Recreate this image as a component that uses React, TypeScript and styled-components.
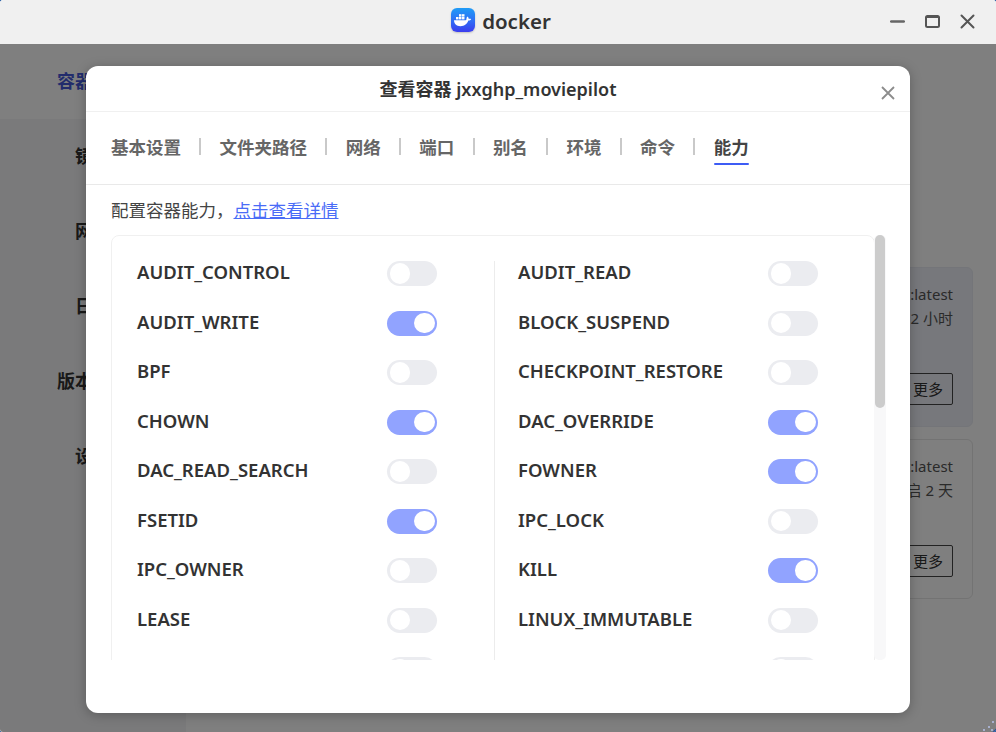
import React from "react";
import styled, { createGlobalStyle } from "styled-components";

const FONT = `"Noto Sans", "Noto Sans CJK SC", sans-serif`;

const Global = createGlobalStyle`
  html, body { margin: 0; padding: 0; background: #0d4a9a; }
  #root { width: 996px; height: 732px; overflow: hidden; }
  * { box-sizing: border-box; }
`;

const Win = styled.div`
  position: relative;
  width: 996px;
  height: 732px;
  display: flex;
  flex-direction: column;
  font-family: ${FONT};
  background: #fff;
  border-radius: 3px;
  overflow: hidden;
`;
const TitleBar = styled.header`
  height: 44px;
  flex: none;
  background: #f0f0f0;
  display: grid;
  grid-template-columns: 1fr auto 1fr;
  align-items: center;
`;
const Brand = styled.div`
  grid-column: 2;
  display: flex;
  align-items: center;
  gap: 7px;
  font-size: 20.500px;
  font-weight: 600;
  color: #333;
  margin: -4px 0 0 6px;
`;
const BrandName = styled.span`
  margin-top: 1px;
`;
const LogoBox = styled.div`
  width: 24px;
  height: 24px;
  border-radius: 6px;
  background: linear-gradient(180deg, #1f9cf6 0%, #2f6cf5 55%, #3b3cee 100%);
  display: flex;
  align-items: center;
  justify-content: center;
  box-shadow: 0 1px 2px rgba(0, 0, 0, 0.2);
`;
const WinBtns = styled.div`
  grid-column: 3;
  justify-self: end;
  display: flex;
  align-items: center;
  gap: 20px;
  padding-right: 21px;
  margin-top: -1px;
`;
const Body = styled.div`
  flex: 1;
  display: flex;
  background: #fff;
`;
const Side = styled.nav`
  width: 186px;
  flex: none;
  background: #f5f5f6;
  display: flex;
  flex-direction: column;
`;
const SideItem = styled.div<{ $active?: boolean }>`
  height: 75px;
  padding-bottom: 3px;
  display: flex;
  align-items: center;
  justify-content: center;
  font-size: 18px;
  font-weight: 600;
  color: ${(p) => (p.$active ? "#4458d8" : "#333")};
  background: ${(p) => (p.$active ? "#ffffff" : "transparent")};
`;
const Main = styled.main`
  flex: 1;
  padding: 223px 23px 0 0;
  display: flex;
  flex-direction: column;
  align-items: flex-end;
  gap: 12px;
`;
const Card = styled.div<{ $tint?: boolean }>`
  width: 400px;
  height: 160px;
  border: 1px solid ${(p) => (p.$tint ? "#e8ebf2" : "#e6e6e6")};
  background: ${(p) => (p.$tint ? "#eef0f8" : "#fff")};
  border-radius: 6px;
  padding: 14px 19px 0 0;
  display: flex;
  flex-direction: column;
  align-items: flex-end;
  font-size: 15px;
  line-height: 24px;
  color: #555;
`;
const MoreBtn = styled.div`
  width: 80px;
  height: 32px;
  margin-top: 43px;
  border: 1px solid #444;
  border-radius: 2px;
  display: flex;
  align-items: center;
  justify-content: flex-end;
  padding: 0 9px 1px 0;
  font-size: 15px;
  color: #333;
`;
const Overlay = styled.div`
  position: absolute;
  left: 0;
  right: 0;
  top: 44px;
  bottom: 0;
  background: rgba(0, 0, 0, 0.5);
`;
const Modal = styled.section`
  position: absolute;
  left: 86px;
  top: 66px;
  width: 824px;
  height: 647px;
  background: #fff;
  border-radius: 12px;
  box-shadow: 0 2px 12px rgba(0, 0, 0, 0.25);
  display: flex;
  flex-direction: column;
`;
const ModalHead = styled.div`
  position: relative;
  height: 46px;
  flex: none;
  padding-bottom: 2px;
  border-bottom: 1px solid #f0f0f0;
  display: flex;
  align-items: center;
  justify-content: center;
  font-size: 18px;
  font-weight: 600;
  color: #333;
`;
const CloseBtn = styled.div`
  position: absolute;
  right: 14px;
  top: 20px;
  width: 16px;
  height: 14px;
  display: flex;
`;
const Tabs = styled.div`
  height: 73px;
  flex: none;
  border-bottom: 1px solid #e9e9e9;
  display: flex;
  align-items: center;
  padding-left: 25px;
`;
const Tab = styled.div<{ $active?: boolean }>`
  position: relative;
  font-size: 17.500px;
  font-weight: 600;
  line-height: 26px;
  margin-top: -3px;
  color: ${(p) => (p.$active ? "#444" : "#666")};
  ${(p) =>
    p.$active &&
    `&::after { content: ""; position: absolute; left: 0; right: 0; bottom: -5px; height: 2px; background: #3d5cf5; border-radius: 1px; }`}
`;
const Sep = styled.div`
  width: 2px;
  height: 17px;
  margin: -3px 18.300px 0;
  background: #c9c9c9;
`;
const Hint = styled.div`
  height: 50px;
  flex: none;
  padding: 12px 0 0 25px;
  font-size: 17.500px;
  line-height: 26px;
  color: #444;
`;
const Link = styled.a`
  color: #4a6cf7;
  text-decoration: underline;
`;
const ScrollArea = styled.div`
  margin-left: 25px;
  width: 775px;
  height: 425px;
  display: flex;
  overflow: hidden;
  flex: none;
`;
const Panel = styled.div`
  flex: 1;
  height: 600px;
  border: 1px solid #f0f0f0;
  border-radius: 8px;
  padding: 0 25px;
  display: grid;
  grid-template-columns: 357px 1px 1fr;
  align-content: start;
`;
const LeftCol = styled.div`
  padding: 13px 0 0 0;
`;
const RightCol = styled.div`
  padding: 13px 0 0 23px;
`;
const Divider = styled.div`
  margin-top: 25px;
  background: #ececec;
  height: 575px;
`;
const Row = styled.div`
  height: 49.500px;
  width: 300px;
  display: flex;
  align-items: center;
  justify-content: space-between;
  font-size: 18.500px;
  font-weight: 600;
  color: #333;
`;
const Label = styled.span`
  margin-top: -4px;
`;
const Switch = styled.div<{ $on?: boolean }>`
  width: 50px;
  height: 25px;
  border-radius: 13px;
  flex: none;
  padding: 2px 2.500px;
  display: flex;
  align-items: flex-start;
  justify-content: ${(p) => (p.$on ? "flex-end" : "flex-start")};
  background: ${(p) => (p.$on ? "#91a3ff" : "#ebecf0")};
`;
const Knob = styled.div`
  width: 20.500px;
  height: 20.500px;
  border-radius: 50%;
  background: #fff;
`;
const Track = styled.div`
  width: 12px;
  flex: none;
  height: 425px;
  margin-left: -1px;
  background: #f8f8f9;
  border-radius: 5px;
  display: flex;
  justify-content: center;
`;
const Thumb = styled.div`
  width: 10px;
  height: 173px;
  border-radius: 5px;
  background: #cccccc;
`;
const Grip = styled.svg`
  position: absolute;
  right: 0;
  bottom: 0;
`;

const left: [string, boolean][] = [
  ["AUDIT_CONTROL", false],
  ["AUDIT_WRITE", true],
  ["BPF", false],
  ["CHOWN", true],
  ["DAC_READ_SEARCH", false],
  ["FSETID", true],
  ["IPC_OWNER", false],
  ["LEASE", false],
  ["", false],
];
const right: [string, boolean][] = [
  ["AUDIT_READ", false],
  ["BLOCK_SUSPEND", false],
  ["CHECKPOINT_RESTORE", false],
  ["DAC_OVERRIDE", true],
  ["FOWNER", true],
  ["IPC_LOCK", false],
  ["KILL", true],
  ["LINUX_IMMUTABLE", false],
  ["", false],
];
const tabs = ["基本设置", "文件夹路径", "网络", "端口", "别名", "环境", "命令", "能力"];

const CapRow = ({ name, on }: { name: string; on: boolean }) => (
  <Row>
    <Label>{name}</Label>
    <Switch $on={on}>
      <Knob />
    </Switch>
  </Row>
);

export default function App() {
  return (
    <Win>
      <Global />
      <TitleBar>
        <Brand>
          <LogoBox>
            <svg width="20" height="16" viewBox="0 0 20 16" fill="#fff">
              <rect x="3" y="5" width="2.500" height="2.400" />
              <rect x="6" y="5" width="2.500" height="2.400" />
              <rect x="9" y="5" width="2.500" height="2.400" />
              <rect x="6" y="2.200" width="2.500" height="2.400" />
              <rect x="9" y="2.200" width="2.500" height="2.400" />
              <path d="M1 8.300h11.600c.7 0 1-.9.9-2 .1-.9.5-1.500 1-1.900.8.5 1.200 1.300 1.200 2.400.9-.3 1.700-.2 2.500.3-.6 1.100-1.600 1.600-2.900 1.500C14.300 12 11.500 14.200 7.500 14.200 3.300 14.200 1.200 12 1 8.300z" />
            </svg>
          </LogoBox>
          <BrandName>docker</BrandName>
        </Brand>
        <WinBtns>
          <svg width="15" height="15" viewBox="0 0 15 15">
            <path d="M1.200 7.500h12.600" stroke="#666" strokeWidth="2.600" strokeLinecap="round" />
          </svg>
          <svg width="15" height="15" viewBox="0 0 15 15" fill="none">
            <rect x="1" y="2" width="13" height="11" rx="1.500" stroke="#555" strokeWidth="2" />
            <path d="M1 3h13" stroke="#555" strokeWidth="2" />
          </svg>
          <svg width="15" height="15" viewBox="0 0 15 15">
            <path d="M1.500 1.500l12 12M13.500 1.500l-12 12" stroke="#555" strokeWidth="2" strokeLinecap="round" />
          </svg>
        </WinBtns>
      </TitleBar>
      <Body>
        <Side>
          <SideItem $active>容器管理</SideItem>
          <SideItem>镜像</SideItem>
          <SideItem>网络</SideItem>
          <SideItem>日志</SideItem>
          <SideItem>版本管理</SideItem>
          <SideItem>设置</SideItem>
        </Side>
        <Main>
          <Card $tint>
            <div>jxxghp/moviepilot:latest</div>
            <div>已运行 2 小时</div>
            <MoreBtn>更多</MoreBtn>
          </Card>
          <Card>
            <div>jxxghp/moviepilot:latest</div>
            <div>已重启 2 天</div>
            <MoreBtn>更多</MoreBtn>
          </Card>
        </Main>
      </Body>
      <Overlay />
      <Grip width="14" height="14" viewBox="0 0 14 14">
        <path d="M14 10.500V14h-3.500z" fill="#1e4fa0" />
        <circle cx="11" cy="4" r="1" fill="#b4c0ea" />
        <circle cx="7" cy="9" r="1" fill="#b4c0ea" />
        <circle cx="2" cy="12" r="1" fill="#b4c0ea" />
        <circle cx="10" cy="12" r="1" fill="#b4c0ea" />
      </Grip>
      <Modal>
        <ModalHead>
          查看容器 jxxghp_moviepilot
          <CloseBtn>
            <svg width="16" height="14" viewBox="0 0 16 14">
              <path d="M2 1l12 12M14 1L2 13" stroke="#8c8c8c" strokeWidth="1.800" />
            </svg>
          </CloseBtn>
        </ModalHead>
        <Tabs>
          {tabs.map((t, i) => (
            <React.Fragment key={t}>
              {i > 0 && <Sep />}
              <Tab $active={t === "能力"}>{t}</Tab>
            </React.Fragment>
          ))}
        </Tabs>
        <Hint>
          配置容器能力，<Link>点击查看详情</Link>
        </Hint>
        <ScrollArea>
          <Panel>
            <LeftCol>
              {left.map(([n, on], i) => (
                <CapRow key={i} name={n} on={on} />
              ))}
            </LeftCol>
            <Divider />
            <RightCol>
              {right.map(([n, on], i) => (
                <CapRow key={i} name={n} on={on} />
              ))}
            </RightCol>
          </Panel>
          <Track>
            <Thumb />
          </Track>
        </ScrollArea>
      </Modal>
    </Win>
  );
}
